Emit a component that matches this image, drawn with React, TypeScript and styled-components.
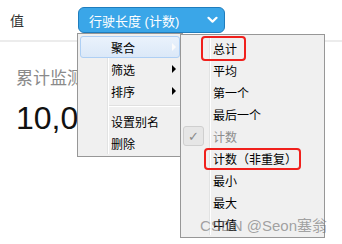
import React from "react";
import styled, { createGlobalStyle, css } from "styled-components";

const GlobalStyle = createGlobalStyle`
  html, body {
    margin: 0;
    padding: 0;
    background: #fff;
  }
  body {
    font-family: "Liberation Sans", "Noto Sans CJK SC", sans-serif;
  }
`;

const Page = styled.div`
  position: relative;
  width: 342px;
  height: 244px;
  overflow: hidden;
  background: #fff;
`;

const Header = styled.div`
  display: flex;
  align-items: center;
  height: 42px;
  padding-left: 10px;
  border-bottom: 2px solid #ececec;
  box-sizing: border-box;
`;

const FieldLabel = styled.span`
  width: 68px;
  font-size: 14px;
  color: #333;
`;

const PickerWrap = styled.div`
  position: relative;
`;

const Picker = styled.button`
  display: flex;
  align-items: center;
  justify-content: space-between;
  width: 147px;
  height: 26px;
  padding: 0 6px 0 10px;
  box-sizing: border-box;
  background: #3aa6e8;
  border: 1px solid #1f7dbd;
  border-radius: 6px;
  color: #fff;
  font-family: "Liberation Sans", "Noto Sans CJK SC", sans-serif;
  font-size: 13px;
  cursor: pointer;
`;

const Body = styled.div`
  padding: 22px 16px 0;
`;

const Title = styled.div`
  font-size: 17px;
  color: #8a8a8a;
  white-space: nowrap;
`;

const BigValue = styled.div`
  margin-top: 13px;
  font-size: 32px;
  color: #111;
  line-height: 1;
  white-space: nowrap;
`;

const Menu = styled.ul<{ $width: number; $rule: number }>`
  position: absolute;
  margin: 0;
  list-style: none;
  width: ${(p) => p.$width}px;
  padding: 2px;
  box-sizing: border-box;
  background: #f0f0f0;
  border: 1px solid #979797;

  &::before {
    content: "";
    position: absolute;
    left: ${(p) => p.$rule}px;
    top: 2px;
    bottom: 2px;
    width: 1px;
    background: #e2e3e3;
    border-right: 1px solid #fff;
  }
`;

const MainMenu = styled(Menu)`
  top: 26px;
  left: -1px;
  z-index: 1;
`;

const SubMenu = styled(Menu)`
  top: -3px;
  left: calc(100% + 1px);
  z-index: 2;
`;

const Item = styled.li<{ $active?: boolean; $muted?: boolean; $pad: number }>`
  position: relative;
  display: flex;
  align-items: center;
  height: 22px;
  padding: 0 3px 0 ${(p) => p.$pad}px;
  box-sizing: border-box;
  font-size: 12px;
  color: ${(p) => (p.$muted ? "#8d8d8d" : "#000")};
  border: 1px solid transparent;
  border-radius: 3px;
  white-space: nowrap;

  ${(p) =>
    p.$active &&
    css`
      background: linear-gradient(#eaf2fc, #dbe8f8);
      border-color: #aecff4;
    `}
`;

const Arrow = styled.span<{ $light?: boolean }>`
  margin-left: auto;
  width: 0;
  height: 0;
  border-left: 4px solid ${(p) => (p.$light ? "#fbfbfb" : "#000")};
  border-top: 4px solid transparent;
  border-bottom: 4px solid transparent;
`;

const Divider = styled.li`
  height: 1px;
  margin: 3px 0 3px 28px;
  background: #e0e0e0;
  border-bottom: 1px solid #fff;
`;

const CheckBox = styled.span`
  position: absolute;
  left: -1px;
  top: 0;
  width: 19px;
  height: 18px;
  display: flex;
  align-items: center;
  justify-content: center;
  background: #e6e6e6;
  border: 1px solid #cfcfcf;
  border-radius: 3px;
  color: #8a8a8a;
  font-size: 13px;
  font-family: "DejaVu Sans", sans-serif;
`;

const Marked = styled.span<{ $l: number; $r: number; $t: number; $b: number }>`
  position: relative;

  &::after {
    content: "";
    position: absolute;
    left: ${(p) => p.$l}px;
    right: ${(p) => p.$r}px;
    top: ${(p) => p.$t}px;
    bottom: ${(p) => p.$b}px;
    border: 2.5px solid #f0201c;
    border-radius: 4px;
  }
`;

const Watermark = styled.div`
  position: absolute;
  right: 15px;
  bottom: 9px;
  font-size: 15px;
  color: rgba(110, 110, 110, 0.62);
  pointer-events: none;
  z-index: 3;
`;

const Chevron = () => (
  <svg width="11" height="8" viewBox="0 0 11 8">
    <polyline
      points="1.5,1.8 5.5,5.6 9.5,1.8"
      fill="none"
      stroke="#fff"
      strokeWidth="2.2"
      strokeLinecap="round"
      strokeLinejoin="round"
    />
  </svg>
);

const aggregates: { label: string; mark?: [number, number, number, number]; muted?: boolean; checked?: boolean }[] = [
  { label: "总计", mark: [-12, -9, -4, -4] },
  { label: "平均" },
  { label: "第一个" },
  { label: "最后一个" },
  { label: "计数", muted: true, checked: true },
  { label: "计数（非重复）", mark: [-9, -4, -2, -3] },
  { label: "最小" },
  { label: "最大" },
  { label: "中值" },
];

export default function App() {
  return (
    <Page>
      <GlobalStyle />
      <Header>
        <FieldLabel>值</FieldLabel>
        <PickerWrap>
          <Picker>
            <span>行驶长度 (计数)</span>
            <Chevron />
          </Picker>
          <MainMenu $width={106} $rule={29}>
            <Item $active $pad={30}>
              聚合
              <Arrow $light />
              <SubMenu $width={145} $rule={28}>
                {aggregates.map((a) => (
                  <Item key={a.label} $pad={29} $muted={a.muted}>
                    {a.checked && <CheckBox>✓</CheckBox>}
                    {a.mark ? (
                      <Marked $l={a.mark[0]} $r={a.mark[1]} $t={a.mark[2]} $b={a.mark[3]}>
                        {a.label}
                      </Marked>
                    ) : (
                      a.label
                    )}
                  </Item>
                ))}
              </SubMenu>
            </Item>
            <Item $pad={30}>
              筛选
              <Arrow />
            </Item>
            <Item $pad={30}>
              排序
              <Arrow />
            </Item>
            <Divider />
            <Item $pad={30}>设置别名</Item>
            <Item $pad={30}>删除</Item>
          </MainMenu>
        </PickerWrap>
      </Header>
      <Body>
        <Title>累计监测里程</Title>
        <BigValue>10,000</BigValue>
      </Body>
      <Watermark>CSDN @Seon塞翁</Watermark>
    </Page>
  );
}
